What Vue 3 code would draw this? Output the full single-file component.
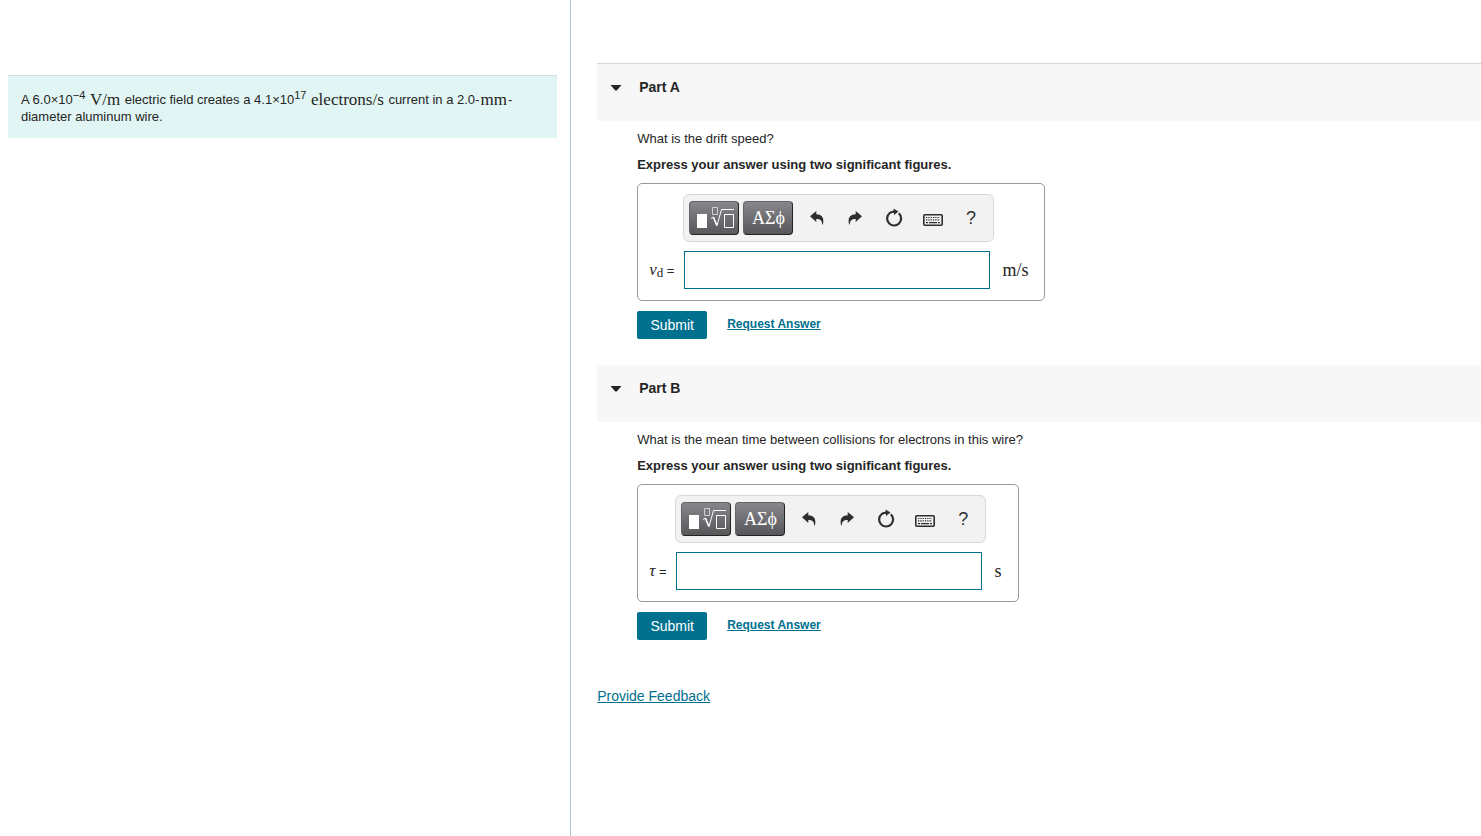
<template>
  <div class="page">
    <aside class="intro">
      <p class="problem">
        A 6.0×10<sup>−4</sup> <span class="math">V/m</span> electric field creates a 4.1×10<sup>17</sup> <span class="math">electrons/s</span> current in a 2.0-<span class="math">mm</span>-diameter aluminum wire.
      </p>
    </aside>
    <main class="parts">
      <section v-for="part in parts" :key="part.id" class="part">
        <header class="part-header">
          <button class="toggle" type="button" @click="part.open = !part.open">
            <svg class="arrow" :class="{ closed: !part.open }" width="12" height="6" viewBox="0 0 12 6"><path d="M.5 0h11L7 5.200Q6 6 5 5.200z" /></svg>
            Part {{ part.id }}
          </button>
        </header>
        <div v-if="part.open" class="part-body">
          <p class="question">{{ part.question }}</p>
          <p class="instruction">Express your answer using two significant figures.</p>
          <div class="answer">
            <div class="toolbar">
              <button class="dark" type="button" aria-label="Templates">
                <svg width="40" height="24" viewBox="0 0 40 24">
                  <path d="M3 8h10v14H3z" fill="#fff" />
                  <g fill="none" stroke="#fff">
                    <path d="M18.500 1.500h5v7h-5z" stroke="#d0d0d3" />
                    <path d="M17 12.500l2.500-1.500 3.500 8.500 4.500-16h12.500" />
                    <path d="M19.500 11.500l3.300 8" stroke-width="1.500" />
                    <path d="M30.500 8.500h9v13h-9z" />
                  </g>
                </svg>
              </button>
              <button class="dark greek" type="button" aria-label="Symbols">ΑΣϕ</button>
              <button class="tool" type="button" aria-label="Undo">
                <svg width="16" height="16" viewBox="0 0 16 16"><path d="M1 6.200L7.300 1v3.300c4.700.2 7.700 2.600 7 8.200-.2 1-.6 1.900-1.200 2.500.3-4-1.600-5.900-5.800-5.900v2.800z" /></svg>
              </button>
              <button class="tool" type="button" aria-label="Redo">
                <svg width="16" height="16" viewBox="0 0 16 16"><path d="M15 6.200L8.700 1v3.300C4 4.500 1 6.900 1.700 12.500c.2 1 .6 1.900 1.200 2.500-.3-4 1.600-5.900 5.800-5.900v2.800z" /></svg>
              </button>
              <button class="tool" type="button" aria-label="Reset">
                <svg width="18" height="20" viewBox="0 0 18 20">
                  <path d="M4.800 5A7 7 0 1 0 13.800 5.300M4.500 5.200Q6.500 3.600 9.500 3.600" fill="none" stroke="#2e2e2e" stroke-width="2.200" />
                  <path d="M8.500.5l5 3-4.500 3.500z" />
                </svg>
              </button>
              <button class="tool" type="button" aria-label="Keyboard">
                <svg class="keyboard" width="20" height="12" viewBox="0 0 20 12">
                  <rect x=".8" y=".8" width="18.400" height="10.400" rx="1" fill="none" stroke="#2e2e2e" stroke-width="1.600" />
                  <path d="M3 3.500h14M3 5.800h14" fill="none" stroke="#2e2e2e" stroke-width="1.200" stroke-dasharray="1.300 1" />
                  <path d="M3 8h2v1.300H3zM6 8h8v1.300H6zM15 8h2v1.300h-2z" />
                </svg>
              </button>
              <button class="tool help" type="button" aria-label="Help">?</button>
            </div>
            <label class="symbol" :for="'answer' + part.id"><i>{{ part.symbol }}</i><sub v-if="part.sub">{{ part.sub }}</sub> =</label>
            <input :id="'answer' + part.id" v-model="part.value" class="field" type="text" />
            <span class="unit">{{ part.unit }}</span>
          </div>
          <div class="actions">
            <button class="submit" type="button">Submit</button>
            <a class="request" href="#">Request Answer</a>
          </div>
        </div>
      </section>
      <a class="feedback" href="#">Provide Feedback</a>
    </main>
  </div>
</template>

<script setup>
import { ref } from "vue";

const parts = ref([
  {
    id: "A",
    question: "What is the drift speed?",
    symbol: "v",
    sub: "d",
    unit: "m/s",
    value: "",
    open: true,
  },
  {
    id: "B",
    question: "What is the mean time between collisions for electrons in this wire?",
    symbol: "τ",
    sub: "",
    unit: "s",
    value: "",
    open: true,
  },
]);
</script>

<style>
body {
  margin: 0;
  background: #fff;
}
</style>

<style scoped>
.page {
  display: grid;
  grid-template-columns: 77fr 123fr;
  min-height: 100vh;
  font-family: "Liberation Sans", Arial, sans-serif;
  font-size: 13px;
  color: #252525;
}
p {
  margin: 0;
}
button {
  font-family: inherit;
  padding: 0;
  border: none;
  cursor: pointer;
}
.intro {
  padding: 75px 13px 0 8px;
}
.problem {
  padding: 15px 13px 13px;
  border-top: 1px solid #d5d9d9;
  background: #e1f5f4;
  line-height: 17px;
}
sup {
  font-size: 11px;
  line-height: 0;
  vertical-align: 5px;
}
.math {
  margin: 0 1px;
  font-family: "Liberation Serif", serif;
  font-size: 17px;
  line-height: 0;
  vertical-align: -1px;
}
.parts {
  padding: 63px 0 40px 26px;
  border-left: 1px solid #b0c4d4;
}
.part {
  padding-bottom: 26px;
}
.part:first-child .part-header {
  border-top: 1px solid #d5d5d5;
}
.part-header {
  height: 57px;
  background: #f7f7f7;
}
.toggle {
  display: flex;
  align-items: center;
  gap: 17px;
  padding: 15px 13px;
  background: none;
  color: #252525;
  font-size: 14px;
  font-weight: bold;
  line-height: 17px;
}
.arrow {
  fill: #252525;
}
.arrow.closed {
  transform: rotate(-90deg);
}
.part-body {
  padding: 10px 0 0 40px;
}
.question,
.instruction {
  margin-bottom: 10px;
  line-height: 16px;
}
.instruction {
  font-weight: bold;
}
.answer {
  display: grid;
  grid-template-columns: auto 311px auto;
  column-gap: 8px;
  row-gap: 9px;
  width: fit-content;
  padding: 10px 16px 11px 11px;
  border: 1px solid #999;
  border-radius: 5px;
  align-items: center;
}
.toolbar {
  grid-column: 2;
  display: flex;
  align-items: center;
  box-sizing: border-box;
  height: 48px;
  padding: 0 3px 0 5px;
  border: 1px solid #d8d8d8;
  border-radius: 6px;
  background: #f2f2f2;
}
.dark {
  display: flex;
  align-items: center;
  justify-content: center;
  box-sizing: border-box;
  width: 50px;
  height: 34px;
  margin-right: 4px;
  border: 1px solid #333;
  border-color: #666 #222 #222 #666;
  border-radius: 4px;
  background: linear-gradient(#86868c, #58585b);
  color: #fff;
}
.greek {
  font-family: "Liberation Serif", "DejaVu Serif", serif;
  font-size: 18px;
}
.tool {
  flex: 1;
  display: flex;
  align-items: center;
  justify-content: center;
  height: 34px;
  background: none;
  color: #2e2e2e;
}
.tool svg {
  fill: #2e2e2e;
}
.keyboard {
  margin-top: 4px;
}
.help {
  font-size: 18px;
}
.symbol {
  grid-column: 1;
  padding-right: 1px;
  white-space: nowrap;
}
.symbol i {
  font-family: "Liberation Serif", serif;
  font-size: 17px;
}
.symbol sub {
  font-family: "Liberation Serif", serif;
  font-size: 13px;
  line-height: 0;
  vertical-align: -2px;
}
.field {
  box-sizing: border-box;
  width: 306px;
  height: 38px;
  margin: 0 1px;
  padding: 0 8px;
  border: 1px solid #00708f;
  border-radius: 0;
  background: #fff;
  font-size: 16px;
}
.unit {
  font-family: "Liberation Serif", serif;
  font-size: 18px;
}
.actions {
  display: flex;
  align-items: center;
  gap: 20px;
  margin-top: 10px;
}
.submit {
  width: 70px;
  height: 28px;
  border-radius: 2px;
  background: #00708f;
  color: #fff;
  font-size: 14px;
}
.request {
  color: #00708f;
  font-size: 12px;
  font-weight: bold;
  line-height: 26px;
  align-self: flex-start;
}
.feedback {
  display: inline-block;
  margin-top: 22px;
  color: #00708f;
  font-size: 14px;
  line-height: 17px;
}
</style>
